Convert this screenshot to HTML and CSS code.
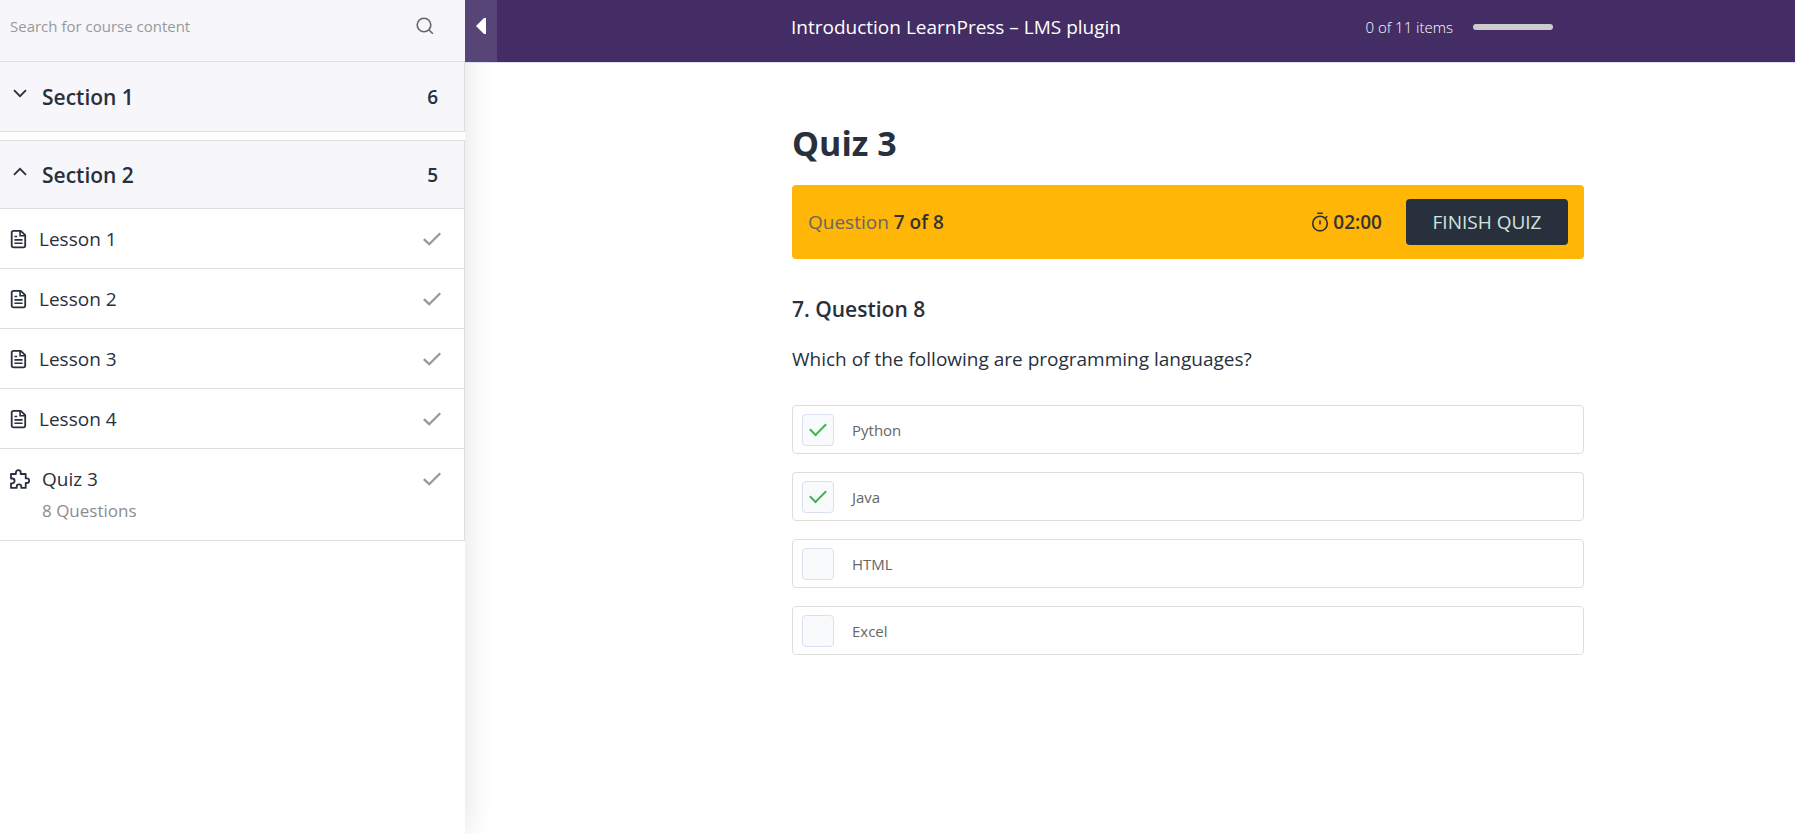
FILE: index.html
```html
<!DOCTYPE html>
<html lang="en">
<head>
    <meta charset="UTF-8">
    <meta name="viewport" content="width=device-width, initial-scale=1.0">
    <title>Quiz 3</title>
    <link rel="stylesheet" href="styles.css">
</head>
<body>
    <!-- icons shared by the curriculum list -->
    <svg class="sprite" aria-hidden="true">
        <symbol id="icon-file" viewBox="0 0 16 20">
            <path d="M3 1.8h7.2l4.5 4.4v10.3a1.8 1.8 0 0 1-1.8 1.8H3a1.8 1.8 0 0 1-1.8-1.8v-13A1.8 1.8 0 0 1 3 1.8z" fill="none" stroke="currentColor" stroke-width="1.8"/>
            <path d="M9.6 2v4.8h5M3.9 7.5h2.8M3.9 10.9h8.2M3.9 14.2h8.2" fill="none" stroke="currentColor" stroke-width="1.6"/>
        </symbol>
        <symbol id="icon-check" viewBox="0 0 20 16">
            <path d="M1.8 8.2l5.4 5L18.2 2.2" fill="none" stroke="currentColor" stroke-width="2.3"/>
        </symbol>
    </svg>

    <div class="page">
        <aside class="sidebar">
            <form class="search">
                <input type="text" name="s" aria-label="Search for course content" placeholder="Search for course content">
                <button type="submit" aria-label="Search">
                    <svg width="18" height="18" viewBox="0 0 18 18" fill="none" stroke="currentColor" stroke-width="1.6">
                        <circle cx="8" cy="8" r="6.8"/>
                        <path d="M12.8 12.8l4 4"/>
                    </svg>
                </button>
            </form>

            <section class="section">
                <button class="section-header" aria-expanded="false">
                    <svg class="arrow" width="14" height="9" viewBox="0 0 14 9"><path d="M1 1.2l6 6 6-6"/></svg>
                    <span class="section-title">Section 1</span>
                    <span class="count">6</span>
                </button>
            </section>

            <section class="section">
                <button class="section-header" aria-expanded="true">
                    <svg class="arrow" width="14" height="9" viewBox="0 0 14 9"><path d="M1 7.8l6-6 6 6"/></svg>
                    <span class="section-title">Section 2</span>
                    <span class="count">5</span>
                </button>
                <ul class="items">
                    <li>
                        <a class="item" href="#lesson-1">
                            <svg class="file"><use href="#icon-file"/></svg>
                            <span class="item-name">Lesson 1</span>
                            <svg class="status"><use href="#icon-check"/></svg>
                        </a>
                    </li>
                    <li>
                        <a class="item" href="#lesson-2">
                            <svg class="file"><use href="#icon-file"/></svg>
                            <span class="item-name">Lesson 2</span>
                            <svg class="status"><use href="#icon-check"/></svg>
                        </a>
                    </li>
                    <li>
                        <a class="item" href="#lesson-3">
                            <svg class="file"><use href="#icon-file"/></svg>
                            <span class="item-name">Lesson 3</span>
                            <svg class="status"><use href="#icon-check"/></svg>
                        </a>
                    </li>
                    <li>
                        <a class="item" href="#lesson-4">
                            <svg class="file"><use href="#icon-file"/></svg>
                            <span class="item-name">Lesson 4</span>
                            <svg class="status"><use href="#icon-check"/></svg>
                        </a>
                    </li>
                    <li>
                        <a class="item" href="#quiz-3">
                            <svg class="puzzle" viewBox="0 0 20 20"><path d="M1 5h4.9V3.6a2.4 2.4 0 0 1 4.8 0V5h5v4.4h1.2a2.3 2.3 0 0 1 0 4.6h-1.2v4.9h-4.4v-1.2a2.3 2.3 0 0 0-4.6 0v1.2H1v-4.6h1.2a2.4 2.4 0 0 0 0-4.8H1z"/></svg>
                            <span class="item-name">Quiz 3 <small>8 Questions</small></span>
                            <svg class="status"><use href="#icon-check"/></svg>
                        </a>
                    </li>
                </ul>
            </section>
        </aside>

        <div class="content">
            <header class="topbar">
                <button class="toggle" aria-label="Toggle sidebar">
                    <svg width="10" height="16" viewBox="0 0 10 16"><path d="M10 0v16H8L0 8l8-8z" fill="#fff"/></svg>
                </button>
                <div class="topbar-inner">
                    <a class="course" href="#course">Introduction LearnPress – LMS plugin</a>
                    <label class="items-done" for="progress">0 of 11 items</label>
                    <progress id="progress" value="0" max="11"></progress>
                </div>
            </header>

            <main class="quiz">
                <h1>Quiz 3</h1>

                <div class="status-bar">
                    <span class="position">Question <b>7 of 8</b></span>
                    <span class="timer">
                        <svg width="18" height="20" viewBox="0 0 18 20" fill="none" stroke="currentColor" stroke-width="1.6">
                            <circle cx="9" cy="11.6" r="7.3"/>
                            <path d="M6.2 1.2h5.6M9 8.6v4M14.4 6l1.8-1.8"/>
                        </svg>
                        02:00
                    </span>
                    <button class="finish">FINISH QUIZ</button>
                </div>

                <form class="question">
                    <h2>7. Question 8</h2>
                    <p>Which of the following are programming languages?</p>
                    <div class="answers">
                        <label class="answer"><input type="checkbox" name="answer" checked> Python</label>
                        <label class="answer"><input type="checkbox" name="answer" checked> Java</label>
                        <label class="answer"><input type="checkbox" name="answer"> HTML</label>
                        <label class="answer"><input type="checkbox" name="answer"> Excel</label>
                    </div>
                </form>
            </main>
        </div>
    </div>
</body>
</html>
```
FILE: styles.css
```css
*{
    box-sizing: border-box;
}
body{
    margin: 0;
    font-family: "Segoe UI", "Open Sans", "Noto Sans", sans-serif;
    font-size: 19px;
    line-height: 28px;
    color: #28303d;
    background: #fff;
}
button, input{
    font-family: inherit;
    color: inherit;
}
button{
    border: none;
    padding: 0;
    background: none;
    cursor: pointer;
}
a{
    color: inherit;
    text-decoration: none;
}
.sprite{
    display: none;
}
.page{
    display: flex;
    min-height: 100vh;
}

/* sidebar */
.sidebar{
    flex: 0 0 465px;
    background: #fff;
    box-shadow: 0 0 30px rgba(0, 0, 0, 0.12);
}
.search{
    display: flex;
    align-items: center;
    height: 62px;
    padding: 0 31px 10px 10px;
    background: #f6f6fb;
    border-bottom: 1px solid #dededa;
}
.search input{
    flex: 1;
    border: none;
    padding: 0;
    font-size: 15px;
    background: none;
    outline: none;
}
.search input::placeholder{
    color: #999;
}
.search button{
    display: flex;
    color: #666;
}
.section{
    border-right: 1px solid #dededa;
    border-bottom: 1px solid #dededa;
}
.section + .section{
    margin-top: 8px;
    border-top: 1px solid #dededa;
}
.section-header{
    display: flex;
    align-items: center;
    width: 100%;
    height: 69px;
    padding: 0 26px 0 13px;
    font-size: 21px;
    font-weight: 600;
    text-align: left;
    background: #f6f6fb;
}
.section + .section .section-header{
    height: 67px;
}
.arrow{
    margin: 0 15px 6px 0;
    fill: none;
    stroke: currentColor;
    stroke-width: 1.8;
}
.section-title{
    flex: 1;
}
.count{
    font-size: 19px;
}
.items{
    margin: 0;
    padding: 0;
    list-style: none;
}
.item{
    display: flex;
    align-items: flex-start;
    padding: 16px 22px 15px 10px;
    border-top: 1px solid #dededa;
}
.item svg{
    flex: none;
}
.file{
    width: 17px;
    height: 20px;
    margin: 4px 12px 0 0;
}
.puzzle{
    width: 20px;
    height: 20px;
    margin: 4px 12px 0 0;
    fill: none;
    stroke: currentColor;
    stroke-width: 1.8;
    stroke-linejoin: round;
}
.item-name{
    flex: 1;
}
.item-name small{
    display: block;
    margin-top: 4px;
    font-size: 17px;
    color: #8c8c8c;
}
.status{
    width: 20px;
    height: 16px;
    margin-top: 6px;
    color: #999;
}

/* header */
.content{
    flex: 1;
    min-width: 0;
}
.topbar{
    position: relative;
    display: flex;
    height: 63px;
    color: #fff;
    background: #432d64;
    border-bottom: 1px solid #d9e0f1;
}
.toggle{
    display: flex;
    justify-content: center;
    flex: 0 0 32px;
    padding-top: 18px;
    background: #584577;
}
.topbar-inner{
    flex: 1;
    display: flex;
    align-items: center;
    padding: 0 242px 9px 294px;
}
.course{
    flex: 1;
}
.items-done{
    margin-right: 20px;
    font-size: 15px;
    font-weight: 300;
}
progress{
    appearance: none;
    width: 80px;
    height: 6px;
    border: none;
    border-radius: 3px;
    overflow: hidden;
}
progress::-webkit-progress-bar{
    background: #ccc;
}
progress::-webkit-progress-value{
    background: #ffb606;
}

/* quiz */
.quiz{
    padding: 56px 211px 40px 327px;
}
h1{
    margin: 0 0 18px;
    font-size: 34px;
    font-weight: 700;
    line-height: 48px;
}
.status-bar{
    display: flex;
    align-items: center;
    padding: 14px 16px;
    border-radius: 4px;
    color: #333;
    background: #ffb606;
}
.position{
    flex: 1;
    color: #666;
}
.position b{
    font-weight: 600;
    color: #333;
}
.timer{
    display: flex;
    align-items: center;
    gap: 4px;
    margin-right: 24px;
    font-weight: 600;
}
.finish{
    width: 162px;
    height: 46px;
    border-radius: 4px;
    font-size: 19px;
    color: #d1e4dd;
    background: #28303d;
}
.question h2{
    margin: 36px 0 22px;
    font-size: 21px;
    font-weight: 600;
    line-height: 28px;
}
.question p{
    margin: 0 0 32px;
}
.answers{
    display: grid;
    gap: 18px;
}
.answer{
    display: flex;
    align-items: center;
    gap: 18px;
    height: 49px;
    padding: 0 9px;
    border: 1px solid #dededa;
    border-radius: 4px;
    font-size: 15px;
    color: #666;
}
.answer input{
    appearance: none;
    display: grid;
    place-items: center;
    width: 32px;
    height: 32px;
    margin: 0;
    border: 1px solid #d9e0f1;
    border-radius: 4px;
    background: #f9fafc;
}
.answer input:checked::before{
    content: "";
    width: 14px;
    height: 7px;
    margin-bottom: 4px;
    border-left: 2px solid #3bb54a;
    border-bottom: 2px solid #3bb54a;
    transform: rotate(-45deg);
}
```
